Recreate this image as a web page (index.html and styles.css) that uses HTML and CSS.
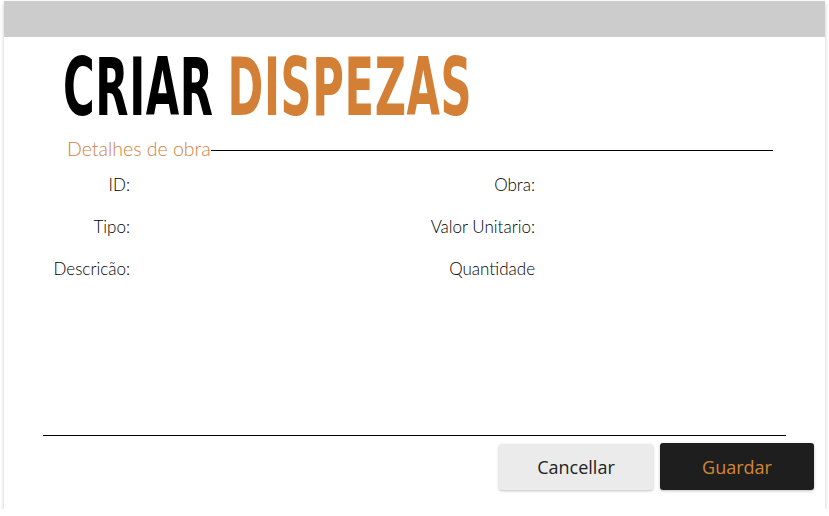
FILE: index.html
```html
<!DOCTYPE html>
<html lang="pt">
<head>
<meta charset="utf-8">
<title>Criar Dispezas</title>
<link rel="stylesheet" href="styles.css">
</head>
<body>
<div class="card">
  <div class="card-header"></div>
  <div class="card-body">
    <h1 class="title"><span class="title-inner"><span class="t-dark">CRIAR</span><span class="t-accent">DISPEZAS</span></span></h1>
    <div class="section-head">
      <span class="section-label">Detalhes de obra</span>
      <span class="section-rule"></span>
    </div>
    <div class="form-grid">
      <div class="lbl">ID:</div><div class="lbl">Obra:</div>
      <div class="lbl">Tipo:</div><div class="lbl">Valor Unitario:</div>
      <div class="lbl">Descricão:</div><div class="lbl">Quantidade</div>
    </div>
    <div class="footer-rule"></div>
    <div class="actions">
      <button class="btn btn-light">Cancellar</button>
      <button class="btn btn-dark">Guardar</button>
    </div>
  </div>
</div>
</body>
</html>
```
FILE: styles.css
```css
html, body {
  margin: 0;
  padding: 0;
  background: #ffffff;
}
.card {
  margin: 1px 4px 0 4px;
  width: 821px;
  height: 508px;
  background: #ffffff;
  box-shadow: 0 2px 4px rgba(0,0,0,0.22);
  display: flex;
  flex-direction: column;
}
.card-header {
  height: 36px;
  background: #cccccc;
  flex: none;
}
.card-body {
  flex: 1;
  display: flex;
  flex-direction: column;
}
.title {
  margin: 15px 0 0 59px;
  height: 72px;
  font-family: "DejaVu Sans Condensed", "DejaVu Sans", sans-serif;
  font-weight: bold;
  font-size: 80px;
  line-height: 72px;
  letter-spacing: 1px;
  white-space: nowrap;
}
.title-inner {
  display: inline-block;
  transform: scaleX(0.6);
  transform-origin: 0 50%;
}
.t-dark { color: #000000; }
.t-accent { color: #d37f35; margin-left: 23px; }
.section-head {
  margin: 14px 0 0 63px;
  width: 706px;
  display: flex;
  align-items: center;
}
.section-label {
  font-family: "Lato", sans-serif;
  font-weight: 300;
  font-size: 19.5px;
  color: #d0823e;
  line-height: 22px;
}
.section-rule {
  flex: 1;
  height: 1px;
  background: #000000;
  margin-top: 2px;
}
.form-grid {
  display: grid;
  grid-template-columns: 126px 405px;
  grid-auto-rows: 42px;
  margin-top: 5px;
  font-family: "Lato", sans-serif;
  font-weight: 300;
  font-size: 17px;
  color: #000000;
}
.lbl {
  text-align: right;
  line-height: 40px;
}
.footer-rule {
  margin: 144px 0 0 39px;
  width: 743px;
  height: 1px;
  background: #000000;
}
.actions {
  display: flex;
  justify-content: flex-end;
  gap: 7px;
  margin: 7px 11px 0 0;
}
.btn {
  width: 154px;
  height: 47px;
  border: none;
  border-radius: 3px;
  font-family: "Open Sans", sans-serif;
  font-size: 18px;
  box-shadow: 0 1px 3px rgba(0,0,0,0.25);
  padding: 0;
}
.btn-light {
  background: #ebebeb;
  color: #222222;
  margin-top: 1px;
  height: 46px;
}
.btn-dark {
  background: #1e1e1e;
  color: #d58634;
}
```
